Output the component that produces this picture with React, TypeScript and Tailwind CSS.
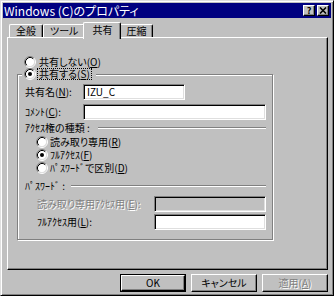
import React from "react";

function Radio({ checked }: { checked?: boolean }) {
  return (
    <svg width="12" height="12" viewBox="0 0 12 12" className="shrink-0">
      <circle cx="6" cy="6" r="4.5" fill="#fff" />
      <path d="M9.89 2.11 A5.5 5.5 0 0 0 2.11 9.89" fill="none" stroke="#808080" />
      <path d="M9.18 2.82 A4.5 4.5 0 0 0 2.82 9.18" fill="none" stroke="#000" />
      <path d="M9.89 2.11 A5.5 5.5 0 0 1 2.11 9.89" fill="none" stroke="#fff" />
      <path d="M9.18 2.82 A4.5 4.5 0 0 1 2.82 9.18" fill="none" stroke="#dfdfdf" />
      {checked && <circle cx="6" cy="6" r="2" fill="#000" />}
    </svg>
  );
}

// mnemonic like "(N)"
function Key({ k }: { k: string }) {
  return (
    <span>
      (<u>{k}</u>)
    </span>
  );
}

function Field({ className, value, disabled }: { className: string; value?: string; disabled?: boolean }) {
  return (
    <div
      className={
        "h-[16px] border border-t-[#808080] border-l-[#808080] border-r-white border-b-white shadow-[inset_1px_1px_0_#000,inset_-1px_-1px_0_#dfdfdf] pl-[3px] flex items-center text-[10px] leading-none " +
        (disabled ? "bg-[#c0c0c0] " : "bg-white ") +
        className
      }
    >
      {value}
    </div>
  );
}

function Etched() {
  return <div className="flex-1 h-[2px] border-t border-t-[#808080] border-b border-b-white" />;
}

function TitleButton({ children }: { children: React.ReactNode }) {
  return (
    <div className="w-[12px] h-[11px] bg-[#c0c0c0] border border-t-white border-l-white border-r-black border-b-black shadow-[inset_-1px_-1px_0_#808080] flex items-center justify-center">
      {children}
    </div>
  );
}

function Tab({ label, selected }: { label: string; selected?: boolean }) {
  return selected ? (
    <div className="relative z-10 mx-[-2px] h-[17px] mb-[-2px] px-[8px] pb-[2px] bg-[#c0c0c0] border-l border-t border-l-white border-t-white border-r border-r-black shadow-[inset_-1px_0_0_#808080] rounded-t-[2px] flex items-center">
      {label}
    </div>
  ) : (
    <div className="h-[13px] px-[6px] border-l border-t border-l-white border-t-white border-r border-r-black shadow-[inset_-1px_0_0_#808080] rounded-t-[2px] flex items-center">
      {label}
    </div>
  );
}

function Button({ children, isDefault, disabled }: { children: React.ReactNode; isDefault?: boolean; disabled?: boolean }) {
  const base = "w-[66px] h-[18px] flex items-center justify-center text-[10px] leading-none ";
  if (isDefault)
    return (
      <div className={base + "border border-black"}>
        <div className="w-full h-full border border-t-white border-l-white border-r-black border-b-black shadow-[inset_-1px_-1px_0_#808080] flex items-center justify-center">
          {children}
        </div>
      </div>
    );
  return (
    <div
      className={
        base +
        "border border-t-white border-l-white border-r-black border-b-black shadow-[inset_-1px_-1px_0_#808080] " +
        (disabled ? "text-[#808080] [text-shadow:1px_1px_0_#fff]" : "")
      }
    >
      {children}
    </div>
  );
}

export default function App() {
  return (
    <div className="w-[336px] h-[298px] bg-white overflow-hidden font-['Noto_Sans_CJK_JP',sans-serif] [font-feature-settings:'palt'] text-black">
      <div className="w-[334px] h-[296px] bg-[#c0c0c0] border border-t-[#dfdfdf] border-l-[#dfdfdf] border-r-black border-b-black shadow-[inset_1px_1px_0_#fff,inset_-1px_-1px_0_#808080] p-[2px] flex flex-col">
        {/* title bar */}
        <div className="h-[15px] bg-[#000080] flex items-center pl-[1px] pr-[2px]">
          <span className="text-white text-[12px] leading-none flex-1">Windows (C)のプロパティ</span>
          <div className="flex gap-[2px]">
            <TitleButton>
              <span className="text-[9px] font-bold leading-none">?</span>
            </TitleButton>
            <TitleButton>
              <svg width="8" height="7" viewBox="0 0 8 7">
                <path d="M1 0.5 L7 6.5 M7 0.5 L1 6.5" stroke="#000" strokeWidth="1.6" />
              </svg>
            </TitleButton>
          </div>
        </div>

        {/* tabs */}
        <div className="mt-[4px] ml-[6px] h-[15px] flex items-end text-[10px] leading-none">
          <Tab label="全般" />
          <Tab label="ツール" />
          <Tab label="共有" selected />
          <Tab label="圧縮" />
        </div>

        {/* panel */}
        <div className="ml-[4px] w-[321px] h-[233px] border border-t-white border-l-white border-r-black border-b-black shadow-[inset_-1px_-1px_0_#808080] text-[10px] leading-none">
          <div className="mt-[18px] pl-[16px] h-[12px] flex items-center gap-[3px]">
            <Radio />
            <span>
              共有しない<Key k="O" />
            </span>
          </div>

          <fieldset className="ml-[9px] w-[256px] border border-[#808080] shadow-[inset_1px_1px_0_#fff,1px_1px_0_#fff] pl-[4px] pr-[6px] pb-[9px]">
            <legend className="pl-[2px] pr-[4px] bg-[#c0c0c0]">
              <div className="h-[12px] flex items-center gap-[1px]">
                <Radio checked />
                <span className="border border-dotted border-black px-[1px] h-[12px] flex items-center">
                  共有する<Key k="S" />
                </span>
              </div>
            </legend>

            <div className="mt-[4px] pl-[3px] flex items-center">
              <span className="w-[58px]">
                共有名<Key k="N" />:
              </span>
              <Field className="w-[102px]" value="IZU_C" />
            </div>
            <div className="mt-[4px] pl-[3px] flex items-center">
              <span className="w-[58px]">
                ｺﾒﾝﾄ<Key k="C" />:
              </span>
              <Field className="w-[183px]" />
            </div>

            <div className="mt-[2px] pl-[3px] h-[12px] flex items-center gap-[8px]">
              <span>ｱｸｾｽ権の種類 :</span>
              <Etched />
            </div>
            <div className="mt-[1px] pl-[14px] flex flex-col">
              <div className="h-[13px] flex items-center gap-[2px]">
                <Radio />
                <span>
                  読み取り専用<Key k="R" />
                </span>
              </div>
              <div className="h-[13px] flex items-center gap-[2px]">
                <Radio checked />
                <span>
                  ﾌﾙｱｸｾｽ<Key k="F" />
                </span>
              </div>
              <div className="h-[13px] flex items-center gap-[2px]">
                <Radio />
                <span>
                  ﾊﾟｽﾜｰﾄﾞで区別<Key k="D" />
                </span>
              </div>
            </div>

            <div className="mt-[6px] pl-[3px] h-[12px] flex items-center gap-[6px]">
              <span>ﾊﾟｽﾜｰﾄﾞ :</span>
              <Etched />
            </div>
            <div className="mt-[4px] pl-[15px] flex items-center">
              <span className="w-[117px] text-[#808080] [text-shadow:1px_1px_0_#fff]">
                読み取り専用ｱｸｾｽ用<Key k="E" />:
              </span>
              <Field className="w-[112px]" disabled />
            </div>
            <div className="mt-[2px] pl-[15px] flex items-center">
              <span className="w-[117px]">
                ﾌﾙｱｸｾｽ用<Key k="L" />:
              </span>
              <Field className="w-[112px]" />
            </div>
          </fieldset>
        </div>

        {/* buttons */}
        <div className="mt-[4px] w-[325px] flex justify-end gap-[5px]">
          <Button isDefault>OK</Button>
          <Button>キャンセル</Button>
          <Button disabled>
            適用<Key k="A" />
          </Button>
        </div>
      </div>
    </div>
  );
}
